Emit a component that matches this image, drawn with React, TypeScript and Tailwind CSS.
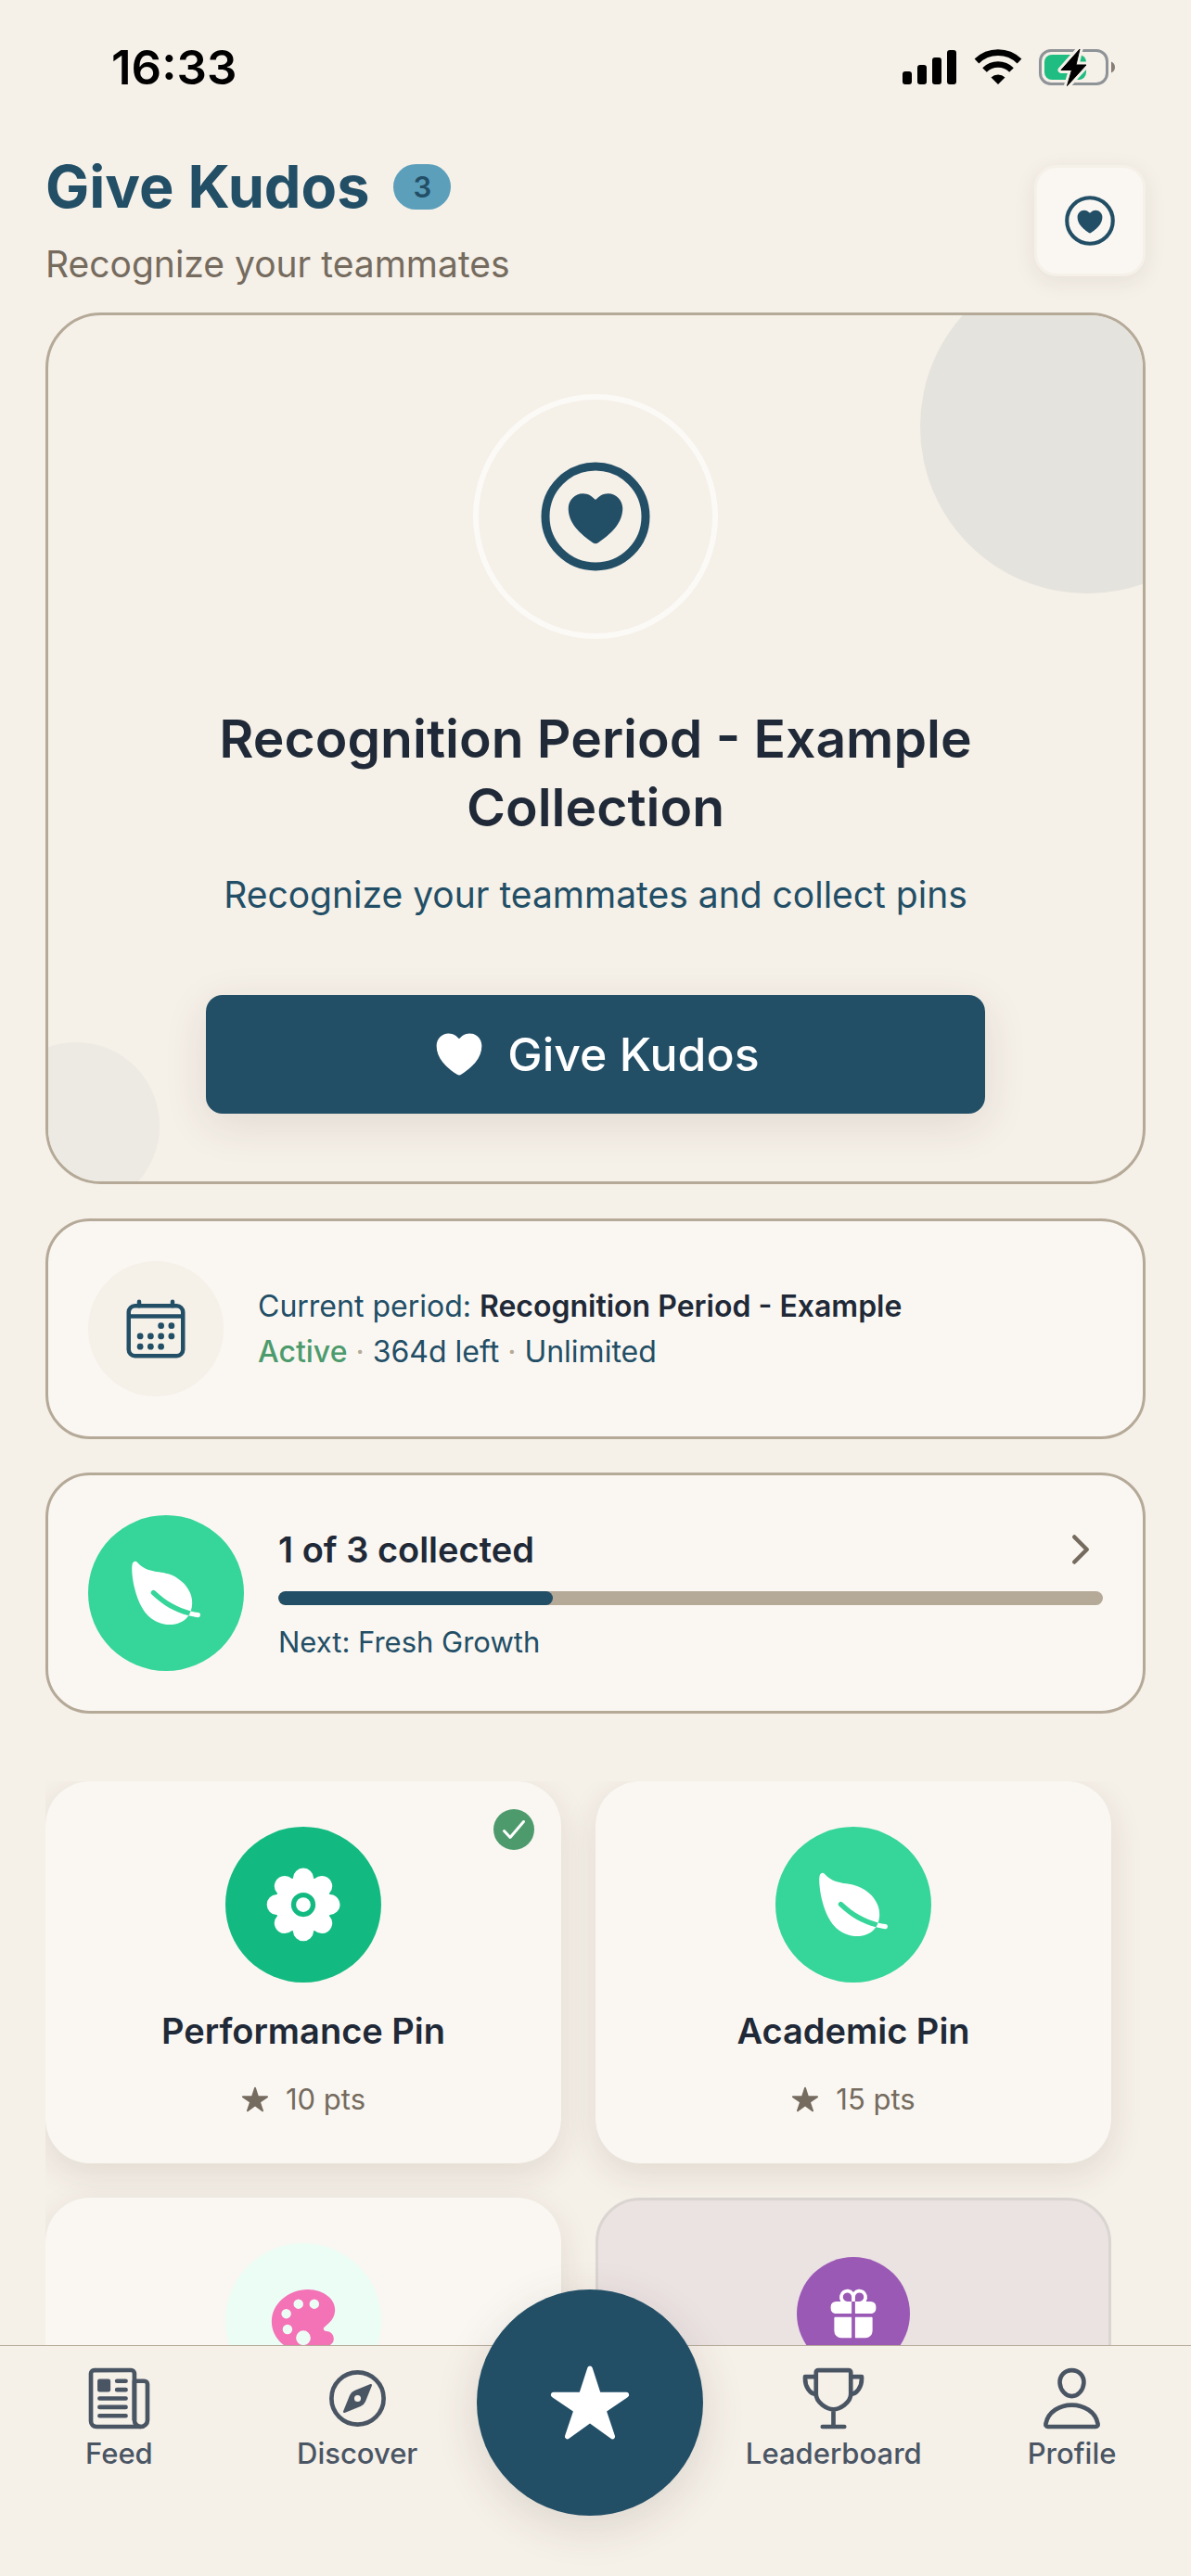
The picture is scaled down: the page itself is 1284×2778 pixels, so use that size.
import type { IconType } from 'react-icons';
import {
  IoCalendarOutline,
  IoChevronForward,
  IoColorPalette,
  IoCompassOutline,
  IoFlower,
  IoGift,
  IoHeart,
  IoHeartCircleOutline,
  IoLeaf,
  IoNewspaperOutline,
  IoPersonOutline,
  IoStar,
  IoTrophyOutline,
} from 'react-icons/io5';

type Pin = {
  id: number;
  icon: IconType;
  circle: string;
  name?: string;
  points?: number;
  collected?: boolean;
};

const pins: Pin[] = [
  { id: 1, name: 'Performance Pin', points: 10, icon: IoFlower, circle: 'bg-[#12ba81] text-white', collected: true },
  { id: 2, name: 'Academic Pin', points: 15, icon: IoLeaf, circle: 'bg-[#36d59a] text-white' },
  { id: 3, icon: IoColorPalette, circle: 'bg-[#ebfdf5] text-[#f472b6]' },
];

const collected = 1;
const total = 3;

function StatusBar() {
  return (
    <div className="flex h-[161px] items-start justify-between pt-[48px] pr-[82px] pl-[120px] text-black">
      <span className="text-[51px] leading-[50px] font-semibold">16:33</span>
      <svg className="mt-[4px] h-[42px] w-[230px]" viewBox="0 0 230 42" aria-hidden="true">
        {/* Signal */}
        <rect x="1" y="25" width="10" height="14" rx="3" />
        <rect x="17" y="18" width="10" height="21" rx="3" />
        <rect x="33" y="10" width="10" height="29" rx="3" />
        <rect x="49" y="2" width="10" height="37" rx="3" />
        {/* Wifi */}
        <path d="M104 39l-7.500-7.500a11 11 0 0 1 15 0z" />
        <path d="M89.500 23.500a20.500 20.500 0 0 1 29 0" fill="none" stroke="#000" strokeWidth="6.500" />
        <path d="M81 14a33 33 0 0 1 46 0" fill="none" stroke="#000" strokeWidth="6.800" />
        {/* Battery */}
        <rect x="149.500" y="2.500" width="72" height="36" rx="11.500" fill="none" stroke="#8e9397" strokeWidth="3" />
        <path d="M226 14.500c2.500.8 4 3.200 4 6s-1.500 5.200-4 6z" fill="#857f76" />
        <rect x="154" y="7" width="45" height="27" rx="8" fill="#1fbd82" />
        <path
          d="M192 1L172 23.500h11.500L178.500 40.500L199 18h-11z"
          stroke="#f5f0e8"
          strokeWidth="7"
          strokeLinejoin="round"
        />
        <path d="M192 1L172 23.500h11.500L178.500 40.500L199 18h-11z" stroke="#000" strokeWidth="1" strokeLinejoin="round" />
      </svg>
    </div>
  );
}

function PinCard({ pin }: { pin: Pin }) {
  const Icon = pin.icon;
  return (
    <article className="relative flex flex-col items-center rounded-[48px] bg-[#faf7f2] pt-[49px] pb-[47px] shadow-[0_12px_36px_rgba(70,50,40,0.11)]">
      {pin.collected && (
        <svg className="absolute top-[30px] right-[29px] size-[44px]" viewBox="0 0 44 44" role="img" aria-label="Collected">
          <circle cx="22" cy="22" r="22" fill="#4d9b6d" />
          <path
            d="M11.500 23.500l6.500 7L32.500 13.500"
            fill="none"
            stroke="#fff"
            strokeWidth="3"
            strokeLinecap="round"
            strokeLinejoin="round"
          />
        </svg>
      )}
      <div className={`flex size-[168px] items-center justify-center rounded-full ${pin.circle}`}>
        <Icon size={84} />
      </div>
      {pin.name && (
        <h3 className="mt-6 text-[38px] leading-[56px] font-semibold text-[#1f2937]">{pin.name}</h3>
      )}
      {pin.points && (
        <p className="mt-6 flex items-center gap-[18px] text-[31px] leading-[44px] text-[#756b5e]">
          <IoStar size={30} />
          {pin.points} pts
        </p>
      )}
    </article>
  );
}

function Tab({ icon: Icon, label }: { icon: IconType; label: string }) {
  return (
    <a href="#" className="flex flex-col items-center gap-1 pt-[19px] text-[#4a5564]">
      <Icon size={75} />
      <span className="text-[31px] leading-[36px] font-medium">{label}</span>
    </a>
  );
}

export default function App() {
  return (
    <div className="flex h-screen flex-col overflow-hidden bg-[#f5f0e8] font-['Inter',sans-serif]">
      <StatusBar />

      <main className="min-h-0 flex-1 overflow-y-auto px-[49px] [scrollbar-width:none]">
        {/* Header */}
        <header className="flex items-center justify-between">
          <div>
            <div className="flex items-center gap-[26px]">
              <h1 className="text-[63px] leading-[80px] font-bold text-[#224e66]">Give Kudos</h1>
              <span className="rounded-full bg-[#5c9fbb] px-[21px] text-[31px] leading-[49px] font-semibold text-[#224e66]">
                3
              </span>
            </div>
            <p className="mt-[14px] text-[39px] leading-[60px] text-[#756b5e]">Recognize your teammates</p>
          </div>
          <button
            type="button"
            aria-label="Kudos"
            className="flex size-[120px] items-center justify-center rounded-[24px] border-[3px] border-[#f5f0e8] bg-[#faf7f2] text-[#224e66] shadow-[0_6px_24px_rgba(70,50,40,0.08)]"
          >
            <IoHeartCircleOutline size={66} />
          </button>
        </header>

        {/* Hero */}
        <section className="relative mt-[22px] flex flex-col items-center overflow-hidden rounded-[60px] border-[3px] border-[#b5a998] pt-[85px] pb-[73px] text-center">
          <div className="absolute -top-[60px] -right-[120px] size-[360px] rounded-full bg-[#e4e3dd]" />
          <div className="absolute -bottom-[30px] -left-[60px] size-[180px] rounded-full bg-[#edeae3]" />
          <div className="flex size-[264px] items-center justify-center rounded-full border-[6px] border-[#fcfaf6] text-[#224e66]">
            <IoHeartCircleOutline size={144} />
          </div>
          <h2 className="mt-[71px] max-w-[900px] text-[57px] leading-[74px] font-semibold text-[#1f2937]">
            Recognition Period - Example Collection
          </h2>
          <p className="mt-[29px] text-[39px] leading-[56px] text-[#224e66]">
            Recognize your teammates and collect pins
          </p>
          <button
            type="button"
            className="relative mt-[80px] flex h-[128px] w-[840px] max-w-full items-center justify-center gap-[22px] rounded-[18px] bg-[#224e66] text-[50px] font-medium text-white shadow-[0_12px_48px_rgba(70,50,40,0.11)]"
          >
            <IoHeart size={60} />
            Give Kudos
          </button>
        </section>

        {/* Current period */}
        <section className="mt-[37px] flex items-center gap-[37px] rounded-[48px] border-[3px] border-[#b5a998] bg-[#faf7f2] px-[43px] py-[43px]">
          <div className="flex size-[146px] shrink-0 items-center justify-center rounded-full bg-[#f5f0e8] text-[#224e66]">
            <IoCalendarOutline size={72} />
          </div>
          <div className="text-[32px] leading-[49px] text-[#224e66]">
            <p>
              Current period: <strong className="font-semibold text-[#1f2937]">Recognition Period - Example</strong>
            </p>
            <p>
              <span className="font-medium text-[#4d9b6d]">Active</span> <span className="text-[#b5a998]">·</span> 364d
              left <span className="text-[#b5a998]">·</span> Unlimited
            </p>
          </div>
        </section>

        {/* Collection progress */}
        <a
          href="#"
          className="mt-[36px] flex items-center gap-[37px] rounded-[48px] border-[3px] border-[#b5a998] bg-[#faf7f2] px-[43px] py-[43px]"
        >
          <div className="flex size-[168px] shrink-0 items-center justify-center rounded-full bg-[#36d59a] text-white">
            <IoLeaf size={84} />
          </div>
          <div className="flex-1">
            <div className="flex items-center justify-between">
              <h2 className="text-[38px] leading-[54px] font-semibold text-[#1f2937]">
                {collected} of {total} collected
              </h2>
              <IoChevronForward size={48} className="text-[#756b5e]" />
            </div>
            <div className="mt-[18px] h-[15px] overflow-hidden rounded-full bg-[#b5a998]">
              <div className="h-full rounded-full bg-[#224e66]" style={{ width: `${(collected / total) * 100}%` }} />
            </div>
            <p className="mt-[18px] text-[31px] leading-[44px] text-[#224e66]">Next: Fresh Growth</p>
          </div>
        </a>

        {/* Pins */}
        <section className="mt-[73px] grid grid-cols-2 gap-[37px] overflow-hidden pr-[37px] pb-[60px]">
          {pins.map((pin) => (
            <PinCard key={pin.id} pin={pin} />
          ))}
          <article className="flex flex-col items-center rounded-[48px] border-[3px] border-[#dad5d0] bg-[#ebe2e2] pt-[61px]">
            <div className="flex size-[122px] items-center justify-center rounded-full bg-[#9b59b6] text-white">
              <IoGift size={60} />
            </div>
          </article>
        </section>
      </main>

      {/* Tab bar */}
      <nav className="relative grid h-[249px] shrink-0 grid-cols-5 border-t border-[#b5a998] bg-[#f5f0e8]">
        <Tab icon={IoNewspaperOutline} label="Feed" />
        <Tab icon={IoCompassOutline} label="Discover" />
        <button
          type="button"
          aria-label="Give kudos"
          className="-mt-[61px] flex size-[244px] items-center justify-center rounded-full bg-[#224e66] text-white shadow-[0_12px_48px_rgba(70,50,40,0.14)]"
        >
          <IoStar size={90} />
        </button>
        <Tab icon={IoTrophyOutline} label="Leaderboard" />
        <Tab icon={IoPersonOutline} label="Profile" />
      </nav>
    </div>
  );
}
